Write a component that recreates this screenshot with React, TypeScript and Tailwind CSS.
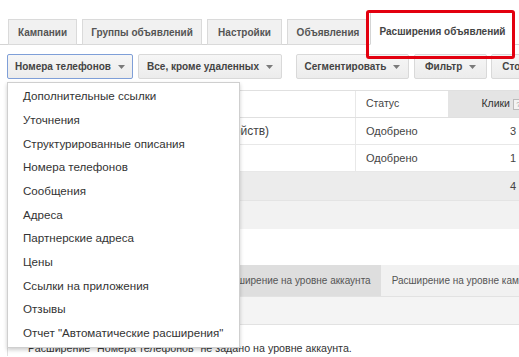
import React from 'react';

const Caret = () => (
    <svg width="7" height="4" viewBox="0 0 7 4" className="ml-[7px] shrink-0">
        <path d="M0 0 L7 0 L3.5 4 Z" fill="#7a7a7a" />
    </svg>
);

const tabs = [
    { label: 'Кампании', w: 'w-[69px]' },
    { label: 'Группы объявлений', w: 'w-[120px]' },
    { label: 'Настройки', w: 'w-[75px]' },
    { label: 'Объявления', w: 'w-[82px]' },
];

const menuItems = [
    'Дополнительные ссылки',
    'Уточнения',
    'Структурированные описания',
    'Номера телефонов',
    'Сообщения',
    'Адреса',
    'Партнерские адреса',
    'Цены',
    'Ссылки на приложения',
    'Отзывы',
    'Отчет "Автоматические расширения"',
];

function ToolButton({ label, className = '', focused = false }: { label: string; className?: string; focused?: boolean }) {
    return (
        <button
            className={`h-[25px] flex items-center justify-center px-[10px] rounded-[2px] border text-[10px] font-bold text-[#444] bg-gradient-to-b from-[#f6f6f6] to-[#ececec] whitespace-nowrap ${focused ? 'border-[#7f9fd8]' : 'border-[#d9d9d9]'} ${className}`}
        >
            {label}
            <Caret />
        </button>
    );
}

export default function App() {
    return (
        <div className="relative w-[519px] h-[357px] overflow-hidden bg-white text-[#333]" style={{ fontFamily: '"Liberation Sans", Arial, sans-serif' }}>
            {/* Tabs */}
            <div className="flex items-end gap-[5px] pl-[8px] pt-[12px] h-[45px] border-b border-[#d4d4d4]">
                {tabs.map(t => (
                    <div
                        key={t.label}
                        className={`${t.w} h-[26px] -mb-px flex items-center justify-center pt-[1px] bg-[#f1f1f1] border border-[#dadada] text-[10px] font-bold text-[#555] whitespace-nowrap`}
                    >
                        {t.label}
                    </div>
                ))}
                <div className="w-[145px] h-[33px] -mb-px -ml-[4px] flex items-center justify-center pt-[6px] bg-white border border-[#d4d4d4] border-b-white text-[10px] font-bold text-[#444] whitespace-nowrap">
                    Расширения объявлений
                </div>
            </div>

            {/* Toolbar */}
            <div className="flex items-center pl-[7px] pt-[9px]">
                <ToolButton label="Номера телефонов" focused className="w-[126px]" />
                <ToolButton label="Все, кроме удаленных" className="w-[144px] ml-[5px]" />
                <div className="w-px h-[25px] bg-[#e6e6e6] ml-[6px]" />
                <ToolButton label="Сегментировать" className="w-[113px] ml-[8px]" />
                <ToolButton label="Фильтр" className="w-[74px] ml-[5px]" />
                <ToolButton label="Столбцы" className="w-[80px] ml-[4px] justify-start" />
            </div>

            {/* Table */}
            <div className="mt-[11px] ml-[7px] border-l border-[#e0e0e0]">
                <div className="flex h-[28px] border-t border-b border-[#e0e0e0] text-[10.5px] text-[#444]">
                    <div className="w-[348px] shrink-0 border-r border-[#e8e8e8]" />
                    <div className="w-[92px] shrink-0 flex items-center pl-[10px]">Статус</div>
                    <div className="flex-1 flex items-center justify-end bg-[#e4e4e4] whitespace-nowrap -mr-[5px]">
                        <span className="text-[#333]">Клики</span>
                        <span className="ml-[3px] w-[11px] h-[11px] border border-[#bbb] bg-[#f3f3f3] text-[8px] leading-[9px] text-center text-[#999]">?</span>
                    </div>
                </div>
                <div className="flex h-[27px] border-b border-[#e8e8e8] text-[11px] text-[#444]">
                    <div className="w-[348px] shrink-0 border-r border-[#e8e8e8] text-right pr-[86px] leading-[27px] text-[12px] whitespace-nowrap overflow-hidden">(для мобильных устройств)</div>
                    <div className="w-[92px] shrink-0 flex items-center pl-[10px]">Одобрено</div>
                    <div className="flex-1 flex items-center justify-end pr-[3px]">3</div>
                </div>
                <div className="flex h-[27px] border-b border-[#e8e8e8] text-[11px] text-[#444]">
                    <div className="w-[348px] shrink-0 border-r border-[#e8e8e8]" />
                    <div className="w-[92px] shrink-0 flex items-center pl-[10px]">Одобрено</div>
                    <div className="flex-1 flex items-center justify-end pr-[3px]">1</div>
                </div>
                <div className="flex h-[28px] bg-[#ececec] text-[11px] text-[#444]">
                    <div className="flex-1" />
                    <div className="flex items-center pr-[3px]">4</div>
                </div>
                <div className="h-[29px] bg-[#f2f2f2] border-t border-[#e4e4e4]" />
                <div className="h-[36px]" />
                <div className="flex h-[31px] text-[10px] text-[#555]">
                    <div className="w-[202px] shrink-0 bg-[#f4f4f4]" />
                    <div className="flex items-center px-[10px] bg-[#dedede] whitespace-nowrap">Расширение на уровне аккаунта</div>
                    <div className="flex-1 flex items-center pl-[11px] bg-[#f1f1f1] whitespace-nowrap overflow-hidden">Расширение на уровне кампании</div>
                </div>
                <div className="h-[29px] bg-[#f4f4f4] border-t border-b border-[#e2e2e2]" />
                <div className="pt-[15px] pl-[20px] text-[10.7px] text-[#333] whitespace-nowrap">
                    Расширение "Номера телефонов" не задано на уровне аккаунта.
                </div>
            </div>

            {/* Dropdown menu */}
            <div className="absolute left-[7px] top-[82px] w-[233px] bg-white border border-[#cfcfcf] shadow-[0_2px_4px_rgba(0,0,0,0.2)] pt-[1px] pb-[2px]">
                {menuItems.map(item => (
                    <div key={item} className="h-[23.7px] flex items-center pl-[15px] text-[11.6px] text-[#333] whitespace-nowrap">
                        {item}
                    </div>
                ))}
            </div>

            {/* Red highlight */}
            <div className="absolute left-[366px] top-[10px] w-[149px] h-[49px] border-[3px] border-[#e3000f] rounded-[3px]" />
        </div>
    );
}
